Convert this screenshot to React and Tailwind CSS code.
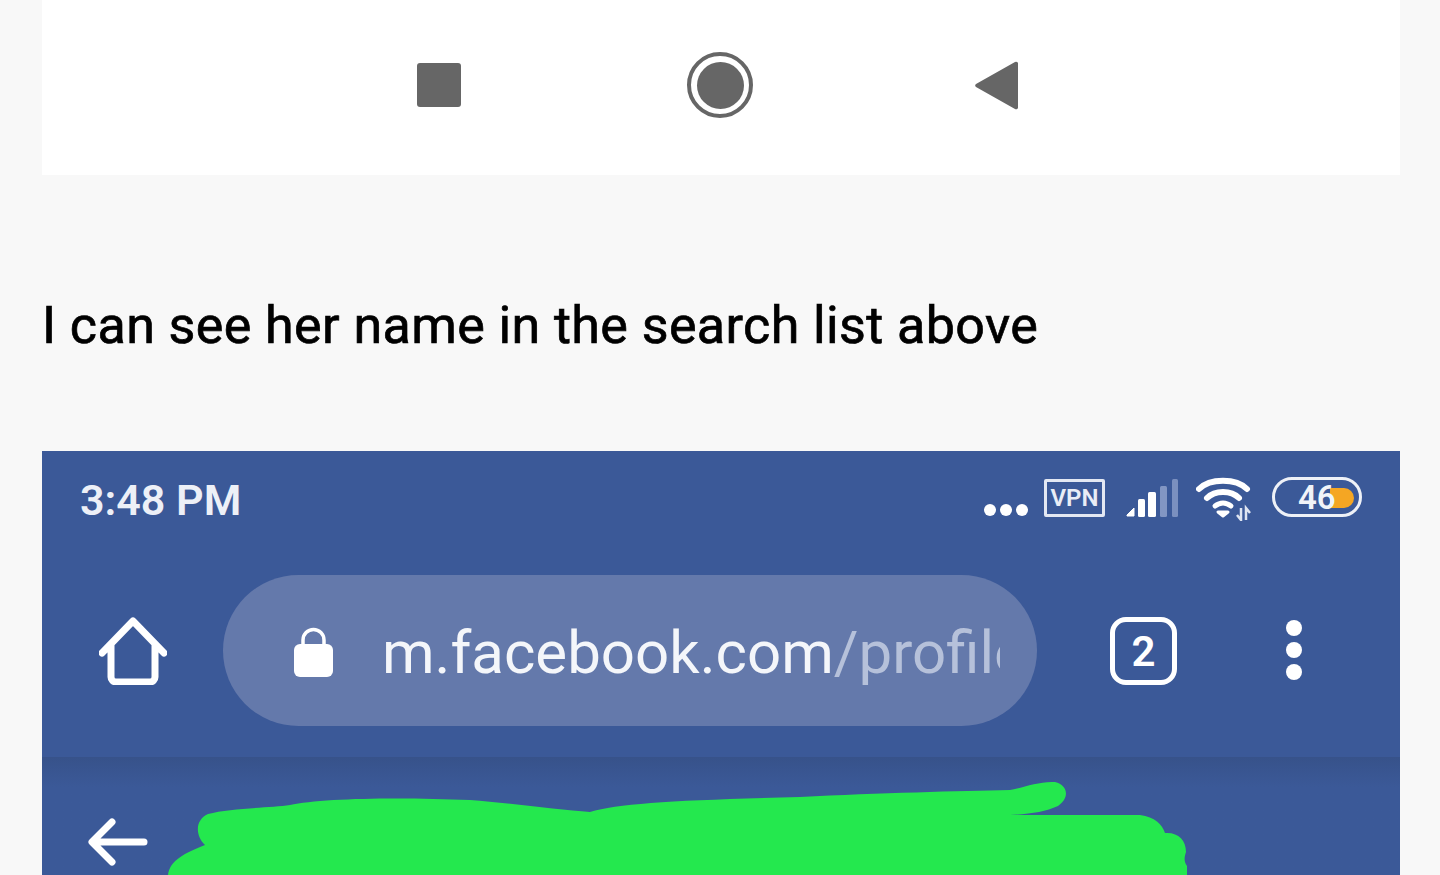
const NavIcons = () => (
  <div className="flex h-[175px] items-center bg-white pb-[5px] pl-[375px]">
    <div className="h-[44px] w-[44px] rounded-[3px] bg-[#666666]" />
    <div className="ml-[226px] flex h-[66px] w-[66px] items-center justify-center rounded-full border-[4px] border-[#666666] bg-white">
      <div className="h-[47px] w-[47px] rounded-full bg-[#666666]" />
    </div>
    <svg className="ml-[222px]" width="43" height="49" viewBox="0 0 43 49">
      <path d="M40 1 a2 2 0 0 1 3 2 V46 a2 2 0 0 1 -3 2 L1 26 a2 2 0 0 1 0 -3 Z" fill="#666666" />
    </svg>
  </div>
);

const Signal = () => (
  <svg width="53" height="38" viewBox="0 0 53 38">
    <path d="M2 36 L9 29 V37 H2 Z" fill="#fff" stroke="#fff" strokeLinejoin="round" />
    <rect x="13" y="20" width="7" height="18" rx="1.500" fill="#fff" />
    <rect x="23" y="13" width="8" height="25" rx="1.500" fill="#fff" />
    <rect x="35" y="7" width="7" height="31" rx="1.500" fill="#8296c3" />
    <rect x="47" y="0" width="6" height="38" rx="1.500" fill="#7b90bf" />
  </svg>
);

const Wifi = () => (
  <svg width="56" height="44" viewBox="0 0 56 44">
    <path d="M3 12 C14 1 40 1 51 12" fill="none" stroke="#fff" strokeWidth="6" strokeLinecap="round" />
    <path d="M11 21 C19 13 35 13 43 21" fill="none" stroke="#fff" strokeWidth="6" strokeLinecap="round" />
    <path d="M19 29 C24 25 30 25 35 29" fill="none" stroke="#fff" strokeWidth="5" strokeLinecap="round" />
    <path d="M22 35 H32 L27 39 Z" fill="#fff" stroke="#fff" strokeWidth="3" strokeLinejoin="round" />
    <path d="M45 31 V43 L41 38 M50 43 V31 L54 36" fill="none" stroke="#dfe5f1" strokeWidth="2.500" />
  </svg>
);

const StatusBar = () => (
  <div className="flex h-[124px] items-start pl-[38px] pr-[38px] pt-[27px]">
    <span className="text-[43px] leading-[44px] font-semibold text-[#edf0f7]">3:48 PM</span>
    <div className="ml-auto flex items-start">
      <div className="mt-[26px] flex gap-[4px]">
        <div className="h-[12px] w-[12px] rounded-full bg-white" />
        <div className="h-[12px] w-[12px] rounded-full bg-white" />
        <div className="h-[12px] w-[12px] rounded-full bg-white" />
      </div>
      <div className="ml-[16px] mt-[1px] flex h-[38px] w-[61px] items-center justify-center rounded-[2px] border-[3px] border-[#e3e8f3] text-[24px] font-semibold text-[#e9edf6]">VPN</div>
      <div className="ml-[20px] mt-[1px]"><Signal /></div>
      <div className="ml-[18px] -mt-[1px]"><Wifi /></div>
      <div className="relative ml-[20px] flex h-[40px] w-[90px] -mt-[1px] items-center rounded-full border-[3px] border-[#eef1f7] pl-[23px]">
        <div className="absolute left-[55px] top-[8px] h-[20px] w-[24px] rounded-r-full bg-[#f5a623]" />
        <span className="relative text-[33px] leading-none font-semibold text-[#f1f3f8]">46</span>
      </div>
    </div>
  </div>
);

const Toolbar = () => (
  <div className="flex h-[182px] items-start pl-[57px]">
    <svg className="mt-[42px]" width="68" height="68" viewBox="0 0 68 68">
      <path d="M3 36 L34 4 L65 36 M12 28 V60 a5 5 0 0 0 5 5 H51 a5 5 0 0 0 5 -5 V28" fill="none" stroke="#fff" strokeWidth="7" strokeLinecap="round" strokeLinejoin="round" />
    </svg>
    <div className="ml-[56px] flex h-[151px] w-[814px] items-center rounded-full bg-[#6479ab] pl-[71px]">
      <svg className="mt-[2px]" width="39" height="50" viewBox="0 0 39 50">
        <path d="M9 20 V13 a10.500 10.500 0 0 1 21 0 V20" fill="none" stroke="#fff" strokeWidth="3.500" />
        <rect x="0" y="17" width="39" height="33" rx="6" fill="#fff" />
      </svg>
      <div className="ml-[49px] mt-[5px] w-[618px] overflow-hidden whitespace-nowrap text-[60px] leading-[70px]">
        <span className="text-[#f4f6fa]">m.facebook.com</span>
        <span className="text-[#b6c1da]">/profile</span>
      </div>
    </div>
    <div className="ml-[73px] mt-[42px] flex h-[68px] w-[67px] items-center justify-center rounded-[16px] border-[5px] border-white pt-[2px] text-[42px] leading-none font-semibold text-white">2</div>
    <div className="ml-[109px] mt-[45px] flex flex-col gap-[6px]">
      <div className="h-[16px] w-[16px] rounded-full bg-white" />
      <div className="h-[16px] w-[16px] rounded-full bg-white" />
      <div className="h-[16px] w-[16px] rounded-full bg-white" />
    </div>
  </div>
);

const PageHeader = () => (
  <div className="flex items-start bg-linear-to-b from-[#37528a] to-[#3b5998] to-[30px] pl-[46px]">
    <svg className="mt-[61px]" width="60" height="48" viewBox="0 0 60 48">
      <path d="M56 24 H5 M24 4 L4 24 L24 44" fill="none" stroke="#fff" strokeWidth="7" strokeLinecap="round" strokeLinejoin="round" />
    </svg>
    {/* scribble hiding the name */}
    <svg className="ml-[20px] mt-[24px]" width="1020" height="94" viewBox="168 781 1020 94">
      <path
        d="M168 875 C170 860 185 853 205 845 C195 835 195 820 208 814 C230 808 270 808 290 805 C320 798 400 797 470 800 C510 803 560 810 590 812 C620 803 680 800 800 797 C880 793 960 791 1010 790 C1025 787 1040 781 1055 782 C1068 785 1070 798 1058 806 C1045 812 1030 814 1010 815 L1140 815 C1155 817 1162 824 1165 833 C1178 832 1186 840 1186 852 C1184 858 1184 862 1187 866 L1187 875 Z"
        fill="#24e84e"
      />
    </svg>
  </div>
);

export default function App() {
  return (
    <div className="h-[875px] overflow-hidden bg-[#f8f8f8] pl-[42px] pr-[40px] font-['Roboto',sans-serif]">
      <NavIcons />
      <p className="mt-[119px] h-[157px] text-[52px] leading-[64px] tracking-[0.4px] text-black [-webkit-text-stroke:0.7px_black]">I can see her name in the search list above</p>
      <div className="bg-[#3b5998]">
        <StatusBar />
        <Toolbar />
        <PageHeader />
      </div>
    </div>
  );
}
